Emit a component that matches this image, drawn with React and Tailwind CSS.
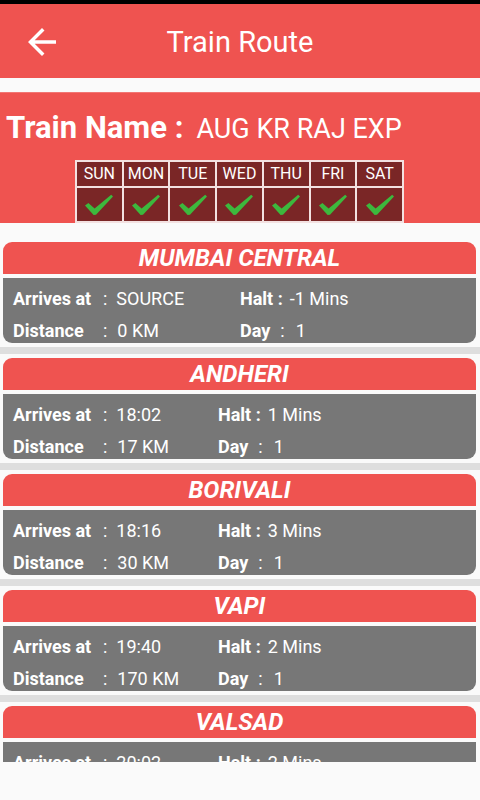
import React from "react";

const stations = [
  { name: "MUMBAI CENTRAL", arr: "SOURCE", halt: "-1 Mins", dist: "0 KM", day: "1", left: "w-[227px]" },
  { name: "ANDHERI", arr: "18:02", halt: "1 Mins", dist: "17 KM", day: "1", left: "w-[205px]" },
  { name: "BORIVALI", arr: "18:16", halt: "3 Mins", dist: "30 KM", day: "1", left: "w-[205px]" },
  { name: "VAPI", arr: "19:40", halt: "2 Mins", dist: "170 KM", day: "1", left: "w-[205px]" },
  { name: "VALSAD", arr: "20:02", halt: "2 Mins", dist: "210 KM", day: "1", left: "w-[205px]" },
];

const days = ["SUN", "MON", "TUE", "WED", "THU", "FRI", "SAT"];

function Check() {
  return (
    <svg width="30" height="22" viewBox="0 0 30 22">
      <path d="M1 11.5 L4.4 9 L10.6 14.6 L27.2 0.8 L29 2.4 L12 20.8 L9.6 20.9 Z" fill="#3db83d" />
    </svg>
  );
}

function Card({ s }) {
  return (
    <div className="flex flex-col">
      <div className="pt-[4px] pb-[4px] pl-[3px] pr-[4px]">
        <div className="h-[32px] bg-[#ef5350] rounded-t-[9px] flex items-center justify-center">
          <span className="text-white font-bold italic text-[24px] leading-none">{s.name}</span>
        </div>
        <div className="mt-[4px] h-[65px] bg-[#777777] rounded-b-[9px] pl-[10px] pt-[4px] text-white text-[18px] overflow-hidden">
          <div className="h-[32px] flex items-center">
            <div className={`${s.left} flex items-center shrink-0`}>
              <span className="font-bold w-[90px]">Arrives at</span>
              <span>:</span>
              <span className="ml-[9px]">{s.arr}</span>
            </div>
            <span className="font-bold">Halt :</span>
            <span className="ml-[7px]">{s.halt}</span>
          </div>
          <div className="h-[32px] flex items-center">
            <div className={`${s.left} flex items-center shrink-0`}>
              <span className="font-bold w-[90px]">Distance</span>
              <span>:</span>
              <span className="ml-[10px]">{s.dist}</span>
            </div>
            <span className="font-bold">Day</span>
            <span className="ml-[10px]">:</span>
            <span className="ml-[11px]">{s.day}</span>
          </div>
        </div>
      </div>
      <div className="h-[7px] bg-[#dedede]" />
    </div>
  );
}

export default function App() {
  return (
    <div
      className="w-[480px] h-[800px] flex flex-col overflow-hidden bg-[#fafafa]"
      style={{ fontFamily: "Roboto, 'Liberation Sans', sans-serif" }}
    >
      <div className="h-[4px] bg-black shrink-0" />
      <div className="h-[74px] bg-[#ef5350] shrink-0 grid grid-cols-[1fr_auto_1fr] items-center">
        <div className="pl-[28px] pt-[2px] flex items-center">
          <svg width="28" height="28" viewBox="4 4 16 16">
            <path d="M20 11H7.83l5.59-5.59L12 4l-8 8 8 8 1.41-1.41L7.83 13H20v-2z" fill="#ffffff" />
          </svg>
        </div>
        <div className="text-white text-[29px] leading-none pt-[3px]">Train Route</div>
        <div />
      </div>
      <div className="h-[14px] shrink-0 bg-[#fafafa]" />
      <div className="h-[131px] shrink-0 bg-[#ef5350] border-t border-[#f27673] flex flex-col">
        <div className="pt-[19px] pl-[6px] flex items-baseline text-white leading-none">
          <span className="font-bold text-[31px]">Train Name :</span>
          <span className="ml-[13px] text-[27px]">AUG KR RAJ EXP</span>
        </div>
        <div className="mt-auto self-start ml-[75px] w-[329px] grid grid-cols-7 gap-[2px] p-[2px] pb-[2px] bg-[#f3e1e1]">
          {days.map((d) => (
            <div key={d} className="h-[24px] bg-[#7a2626] flex items-center justify-center text-white text-[16px] leading-none">
              {d}
            </div>
          ))}
          {days.map((d) => (
            <div key={d + "c"} className="h-[33px] bg-[#7a2626] flex items-center justify-center">
              <Check />
            </div>
          ))}
        </div>
      </div>
      <div className="h-[539px] shrink-0 overflow-hidden pt-[15px] bg-[#fafafa]">
        {stations.map((s) => (
          <Card key={s.name} s={s} />
        ))}
      </div>
      <div className="flex-1 bg-[#fafafa]" />
    </div>
  );
}
